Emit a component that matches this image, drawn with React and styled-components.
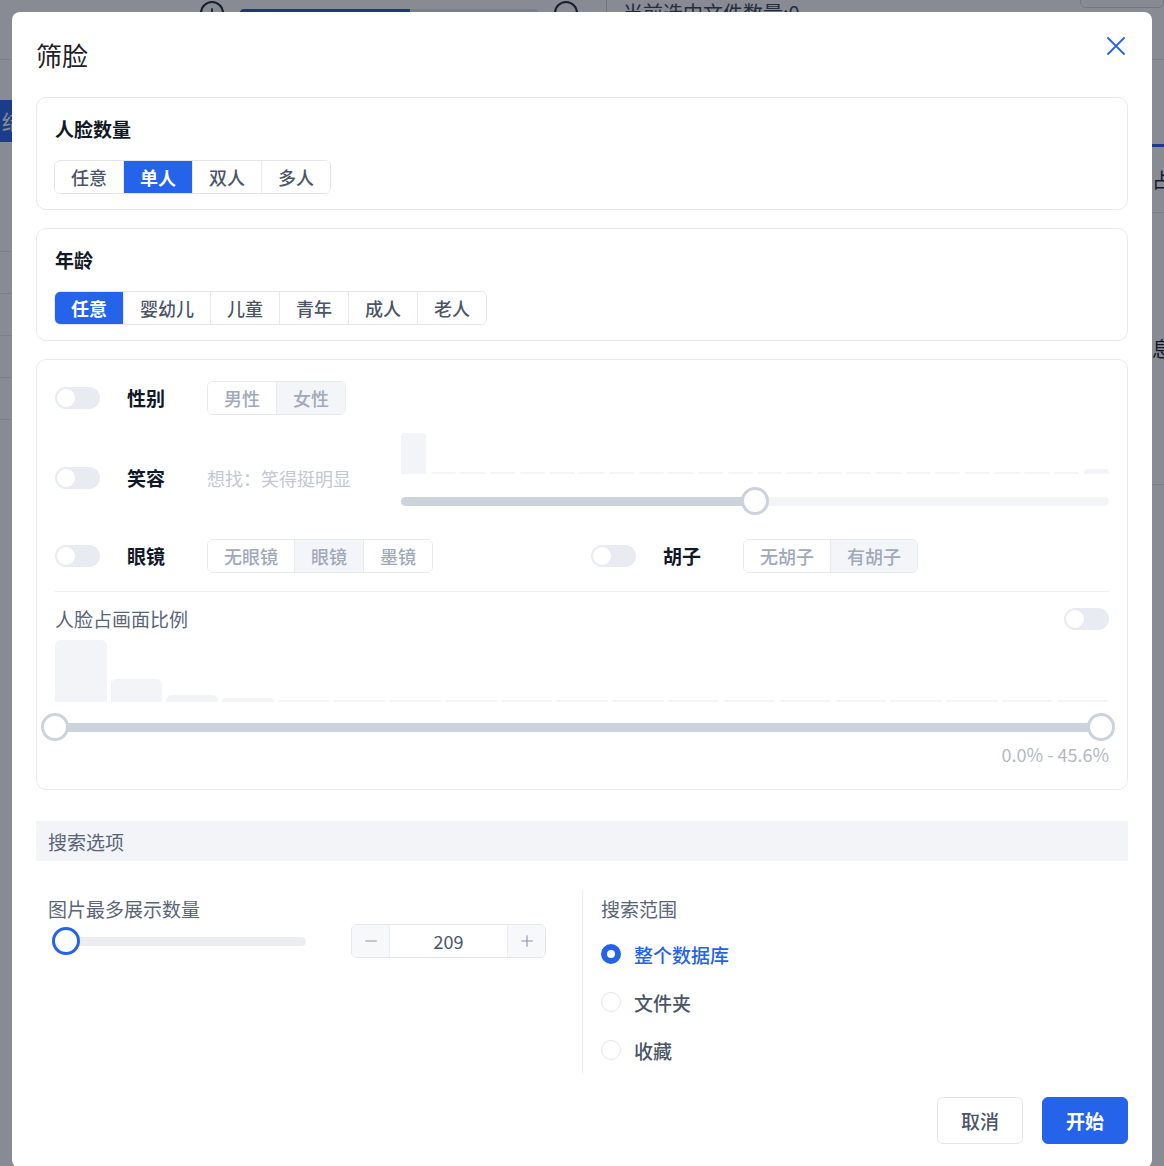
import React from 'react'
import styled, { createGlobalStyle, css } from 'styled-components'
import { Minus, Plus } from 'lucide-react'

const GlobalStyle = createGlobalStyle`
  html, body { margin: 0; padding: 0; }
  body {
    font-family: "Noto Sans CJK SC", "Noto Sans", sans-serif;
    background: #fff;
    overflow: hidden;
  }
  * { box-sizing: border-box; }
`

/* ---------- page behind the dialog ---------- */

const Page = styled.div`
  width: 1164px;
  height: 1166px;
  display: flex;
  flex-direction: column;
  overflow: hidden;
  background: #fff;
`

const Toolbar = styled.div`
  height: 60px;
  flex: none;
  display: flex;
  align-items: flex-start;
  padding-left: 200px;
  border-bottom: 1px solid #e5e7eb;
`

const ZoomGroup = styled.div`
  height: 26px;
  display: flex;
  align-items: center;
  gap: 16px;
`

const RoundIcon = styled.span`
  width: 24px;
  height: 24px;
  border-radius: 50%;
  border: 2px solid #1f2937;
  display: flex;
  align-items: center;
  justify-content: center;
  color: #1f2937;
`

const ZoomTrack = styled.div`
  width: 298px;
  height: 8px;
  border-radius: 4px;
  background: linear-gradient(90deg, #2b59c3 0 57%, #e5e7eb 57% 100%);
`

const ToolbarDivider = styled.span`
  width: 1px;
  height: 26px;
  background: #d1d5db;
  margin-left: 12px;
`

const SelectedCount = styled.span`
  font-size: 20px;
  color: #374151;
  margin-top: -2px;
`

const ToolbarButton = styled.span`
  margin-left: auto;
  margin-top: -14px;
  width: 84px;
  height: 22px;
  border: 1px solid #d1d5db;
  border-radius: 6px;
`

const Workspace = styled.div`
  flex: 1;
  display: flex;
`

const Sidebar = styled.div`
  width: 170px;
  padding-top: 40px;
  display: flex;
  flex-direction: column;
`

const SideItem = styled.div`
  height: 42px;
  flex: none;
  display: flex;
  align-items: center;
  padding-left: 2px;
  font-size: 20px;
  color: #374151;
  border-bottom: 1px solid #e5e7eb;
  ${p => p.$active && css`
    background: #2563eb;
    color: #fff;
    border-bottom: 0;
    margin-bottom: 68px;
  `}
`

const MainArea = styled.div`
  flex: 1;
`

const InfoPanel = styled.div`
  width: 200px;
  margin-right: -186px;
  display: flex;
  flex-direction: column;
`

const InfoTab = styled.div`
  height: 87px;
  border-bottom: 3px solid #2563eb;
`

const InfoRow = styled.div`
  height: ${p => p.$height}px;
  padding-left: 2px;
  display: flex;
  align-items: center;
  font-size: 20px;
  color: #111827;
  border-bottom: 1px solid #e5e7eb;
`

/* ---------- dialog ---------- */

const Overlay = styled.div`
  position: fixed;
  inset: 0;
  padding: 12px;
  background: rgba(17, 24, 39, 0.5);
  overflow: hidden;
`

const Dialog = styled.div`
  width: 1140px;
  background: #fff;
  border-radius: 8px;
  padding: 25px 24px 24px;
`

const Header = styled.div`
  display: flex;
  align-items: flex-start;
  justify-content: space-between;
  margin-bottom: 24px;
`

const Title = styled.h2`
  margin: 0;
  font-size: 26px;
  line-height: 36px;
  font-weight: 400;
  color: #1f2329;
`

const CloseButton = styled.button`
  width: 24px;
  height: 24px;
  margin-top: -3px;
  padding: 0;
  border: 0;
  background: none;
  color: #2563eb;
  display: flex;
  align-items: center;
  justify-content: center;
  cursor: pointer;
`

const Card = styled.section`
  border: 1px solid #e8eaef;
  border-radius: 10px;
  padding: ${p => p.$pad || '18px 18px 15px'};
  & + & { margin-top: 18px; }
`

const CardTitle = styled.h3`
  margin: 0 0 18px;
  font-size: 19px;
  line-height: 26px;
  font-weight: 700;
  color: #111827;
`

const Segmented = styled.div`
  display: inline-flex;
  height: 34px;
  margin-left: ${p => (p.$muted ? 0 : -1)}px;
  border: 1px solid ${p => (p.$muted ? '#e8eaef' : '#e3e6ec')};
  border-radius: 6px;
  overflow: hidden;
  flex: none;
`

const Segment = styled.button`
  border: 0;
  margin: 0;
  padding: 0 16px;
  font-family: inherit;
  font-size: 18px;
  line-height: 32px;
  font-weight: 500;
  color: #4b5568;
  background: #fff;
  cursor: pointer;
  & + & { border-left: 1px solid #e3e6ec; }
  ${p => p.$active && css`
    background: #2563eb;
    color: #fff;
    font-weight: 700;
  `}
  ${p => p.$muted && css`
    color: #a0a9ba;
    cursor: default;
    & + & { border-left-color: #e8eaef; }
  `}
  ${p => p.$muted && p.$active && css`
    background: #f3f5f9;
    color: #a0a9ba;
    font-weight: 500;
  `}
`

const AttrRow = styled.div`
  display: flex;
  align-items: center;
  margin-top: ${p => p.$top || 0}px;
`

const AttrGrid = styled.div`
  display: grid;
  grid-template-columns: 1fr 1fr;
  column-gap: 18px;
  margin-top: 16px;
`

const Toggle = styled.span`
  position: relative;
  width: 45px;
  height: 22px;
  flex: none;
  border-radius: 11px;
  background: #e8ebf1;
  &::after {
    content: '';
    position: absolute;
    left: 2px;
    top: 2px;
    width: 18px;
    height: 18px;
    border-radius: 50%;
    background: #fff;
  }
`

const AttrLabel = styled.span`
  width: 80px;
  margin-left: 27px;
  flex: none;
  font-size: 19px;
  line-height: 26px;
  font-weight: 700;
  color: #111827;
`

const Hint = styled.span`
  font-size: 18px;
  color: #c3c8d1;
`

const SmileScale = styled.div`
  flex: 0 0 708px;
  margin-left: auto;
  padding-bottom: 8px;
`

const Histogram = styled.div`
  height: ${p => p.$height}px;
  display: flex;
  align-items: flex-end;
  gap: ${p => p.$gap}px;
`

const Bar = styled.div`
  flex: 1;
  min-height: 2px;
  background: #f3f4f7;
  border-radius: ${p => p.$radius}px ${p => p.$radius}px 0 0;
`

const Slider = styled.div`
  position: relative;
  height: 28px;
  margin-top: ${p => p.$top || 0}px;
  margin-right: ${p => p.$right || 0}px;
`

const Rail = styled.div`
  position: absolute;
  left: 0;
  right: 0;
  top: 50%;
  height: 9px;
  margin-top: -4.5px;
  border-radius: 5px;
  background: ${p => p.$color};
`

const Thumb = styled.span`
  position: absolute;
  top: 0;
  width: 28px;
  height: 28px;
  margin-left: -14px;
  border-radius: 50%;
  background: #fff;
  border: 3px solid ${p => p.$color};
`

const Divider = styled.hr`
  margin: 18px 0 0;
  border: 0;
  border-top: 1px solid #eef0f3;
`

const RatioHead = styled.div`
  display: flex;
  align-items: center;
  justify-content: space-between;
  margin: 14px 0 8px;
`

const SubTitle = styled.span`
  font-size: 19px;
  line-height: 26px;
  color: #5b6578;
`

const RangeText = styled.div`
  margin-top: 2px;
  text-align: right;
  font-size: 18px;
  line-height: 22px;
  color: #b3b9c3;
`

const SectionBar = styled.div`
  margin-top: 31px;
  height: 40px;
  padding-left: 12px;
  display: flex;
  align-items: center;
  background: #f3f4f8;
  font-size: 19px;
  color: #5b6578;
`

const Options = styled.div`
  display: grid;
  grid-template-columns: 546px 1fr;
  margin-top: 29px;
`

const OptionColumn = styled.div`
  padding: 6px 0 0 ${p => p.$left}px;
  ${p => p.$divided && css`border-left: 1px solid #eceef2;`}
`

const LimitRow = styled.div`
  display: flex;
  align-items: center;
  margin-top: 2px;
`

const LimitSlider = styled(Slider)`
  width: 254px;
  margin-left: 4px;
`

const Stepper = styled.div`
  width: 195px;
  height: 34px;
  margin-left: 45px;
  display: flex;
  border: 1px solid #e5e7eb;
  border-radius: 6px;
  overflow: hidden;
`

const StepButton = styled.button`
  width: 37px;
  padding: 0;
  border: 0;
  background: #f7f8fa;
  color: #8e97a6;
  display: flex;
  align-items: center;
  justify-content: center;
`

const StepValue = styled.div`
  flex: 1;
  border-left: 1px solid #eceef2;
  border-right: 1px solid #eceef2;
  text-align: center;
  font-size: 18px;
  line-height: 32px;
  color: #4b5568;
`

const RadioList = styled.div`
  margin-top: 8px;
`

const RadioItem = styled.label`
  height: 48px;
  display: flex;
  align-items: center;
  gap: 13px;
  font-size: 19px;
  font-weight: 500;
  color: ${p => (p.$checked ? '#2563eb' : '#4b5568')};
`

const RadioDot = styled.span`
  width: 20px;
  height: 20px;
  flex: none;
  border-radius: 50%;
  border: 1px solid #e5e7eb;
  background: #fff;
  ${p => p.$checked && css`border: 6.5px solid #2563eb;`}
`

const Footer = styled.div`
  display: flex;
  justify-content: flex-end;
  gap: 19px;
  margin-top: 23px;
`

const Button = styled.button`
  height: 47px;
  padding: 0 23px;
  border-radius: 6px;
  font-family: inherit;
  font-size: 19px;
  font-weight: 500;
  cursor: pointer;
  border: 1px solid #e5e7eb;
  background: #fff;
  color: #4b5568;
  ${p => p.$primary && css`
    border-color: #2563eb;
    background: #2563eb;
    color: #fff;
    font-weight: 700;
  `}
`

const faceCounts = ['任意', '单人', '双人', '多人']
const ages = ['任意', '婴幼儿', '儿童', '青年', '成人', '老人']
const smileBars = [41, ...Array(22).fill(2), 5]
const ratioBars = [62, 23, 7, 4, ...Array(15).fill(2)]
const scopes = ['整个数据库', '文件夹', '收藏']

const SegmentGroup = ({ items, active, muted }) => (
  <Segmented $muted={muted}>
    {items.map((item, i) => (
      <Segment key={item} $active={i === active} $muted={muted}>{item}</Segment>
    ))}
  </Segmented>
)

const CloseIcon = () => (
  <svg width="18" height="18" viewBox="0 0 18 18" fill="none" stroke="currentColor" strokeWidth="1.8" strokeLinecap="round">
    <path d="M1 1 17 17M17 1 1 17" />
  </svg>
)

const BackgroundPage = () => (
  <Page>
    <Toolbar>
      <ZoomGroup>
        <RoundIcon><Plus size={14} strokeWidth={3} /></RoundIcon>
        <ZoomTrack />
        <RoundIcon><Minus size={14} strokeWidth={3} /></RoundIcon>
        <ToolbarDivider />
        <SelectedCount>当前选中文件数量:0</SelectedCount>
      </ZoomGroup>
      <ToolbarButton />
    </Toolbar>
    <Workspace>
      <Sidebar>
        <SideItem $active>结果</SideItem>
        <SideItem />
        <SideItem />
        <SideItem />
        <SideItem />
        <SideItem />
      </Sidebar>
      <MainArea />
      <InfoPanel>
        <InfoTab />
        <InfoRow $height={66}>占比</InfoRow>
        <InfoRow $height={272}>息</InfoRow>
      </InfoPanel>
    </Workspace>
  </Page>
)

const FaceFilterDialog = () => (
  <Overlay>
    <Dialog>
      <Header>
        <Title>筛脸</Title>
        <CloseButton aria-label="关闭"><CloseIcon /></CloseButton>
      </Header>

      <Card>
        <CardTitle>人脸数量</CardTitle>
        <SegmentGroup items={faceCounts} active={1} />
      </Card>

      <Card>
        <CardTitle>年龄</CardTitle>
        <SegmentGroup items={ages} active={0} />
      </Card>

      <Card $pad="21px 18px 24px">
        <AttrRow>
          <Toggle />
          <AttrLabel>性别</AttrLabel>
          <SegmentGroup items={['男性', '女性']} active={1} muted />
        </AttrRow>

        <AttrRow $top={18}>
          <Toggle />
          <AttrLabel>笑容</AttrLabel>
          <Hint>想找：笑得挺明显</Hint>
          <SmileScale>
            <Histogram $height={41} $gap={4.6}>
              {smileBars.map((h, i) => (
                <Bar key={i} $radius={4} style={{ height: h }} />
              ))}
            </Histogram>
            <Slider $top={13}>
              <Rail $color="#f3f4f7" />
              <Rail $color="#cdd3dd" style={{ right: '50%' }} />
              <Thumb $color="#cdd3dd" style={{ left: '50%' }} />
            </Slider>
          </SmileScale>
        </AttrRow>

        <AttrGrid>
          <AttrRow>
            <Toggle />
            <AttrLabel>眼镜</AttrLabel>
            <SegmentGroup items={['无眼镜', '眼镜', '墨镜']} active={1} muted />
          </AttrRow>
          <AttrRow>
            <Toggle />
            <AttrLabel>胡子</AttrLabel>
            <SegmentGroup items={['无胡子', '有胡子']} active={1} muted />
          </AttrRow>
        </AttrGrid>

        <Divider />

        <RatioHead>
          <SubTitle>人脸占画面比例</SubTitle>
          <Toggle />
        </RatioHead>
        <Histogram $height={62} $gap={4}>
          {ratioBars.map((h, i) => (
            <Bar key={i} $radius={6} style={{ height: h }} />
          ))}
        </Histogram>
        <Slider $top={11} $right={8}>
          <Rail $color="#cdd3dd" />
          <Thumb $color="#cdd3dd" style={{ left: '0%' }} />
          <Thumb $color="#cdd3dd" style={{ left: '100%' }} />
        </Slider>
        <RangeText>0.0% - 45.6%</RangeText>
      </Card>

      <SectionBar>搜索选项</SectionBar>

      <Options>
        <OptionColumn $left={12}>
          <SubTitle>图片最多展示数量</SubTitle>
          <LimitRow>
            <LimitSlider>
              <Rail $color="#ebedf1" />
              <Thumb $color="#2563eb" style={{ left: 14 }} />
            </LimitSlider>
            <Stepper>
              <StepButton aria-label="减少"><Minus size={18} strokeWidth={1.5} /></StepButton>
              <StepValue>209</StepValue>
              <StepButton aria-label="增加"><Plus size={18} strokeWidth={1.5} /></StepButton>
            </Stepper>
          </LimitRow>
        </OptionColumn>

        <OptionColumn $left={18} $divided>
          <SubTitle>搜索范围</SubTitle>
          <RadioList>
            {scopes.map((s, i) => (
              <RadioItem key={s} $checked={i === 0}>
                <RadioDot $checked={i === 0} />
                {s}
              </RadioItem>
            ))}
          </RadioList>
        </OptionColumn>
      </Options>

      <Footer>
        <Button>取消</Button>
        <Button $primary>开始</Button>
      </Footer>
    </Dialog>
  </Overlay>
)

const App = () => (
  <>
    <GlobalStyle />
    <BackgroundPage />
    <FaceFilterDialog />
  </>
)

export default App
